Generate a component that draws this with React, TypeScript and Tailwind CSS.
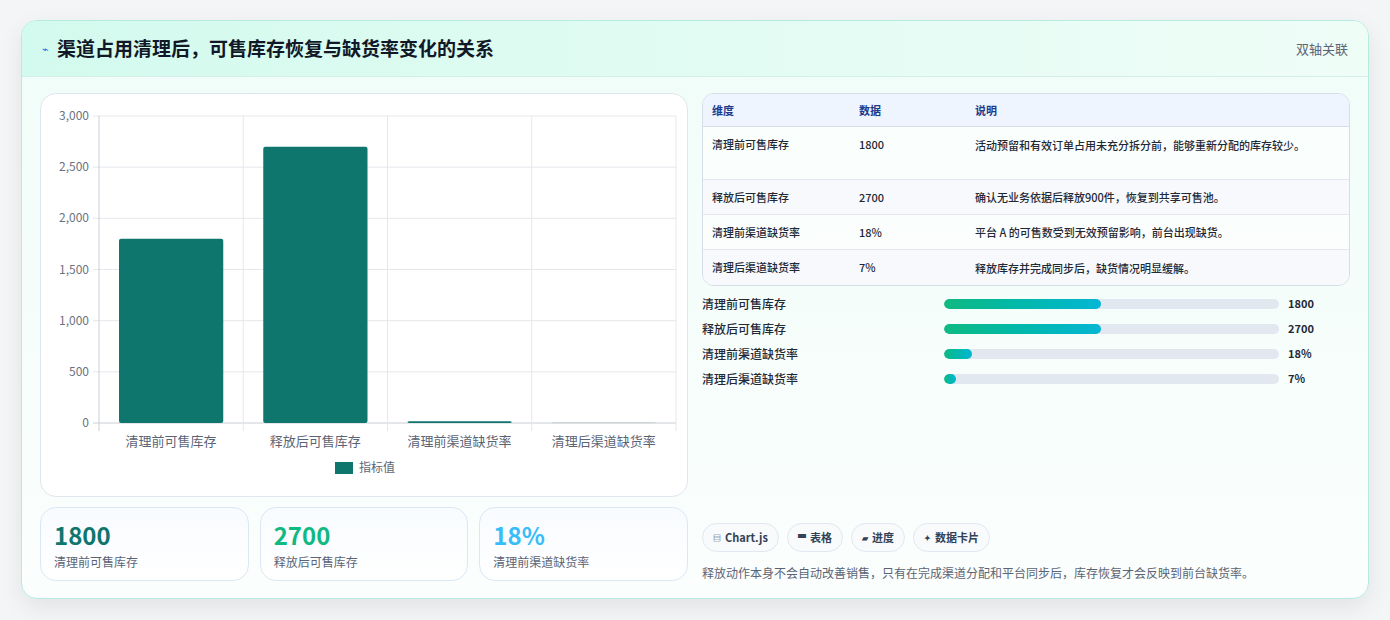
import React from "react";

const F = { fontFamily: '"Noto Sans CJK SC", "Noto Sans", sans-serif' };

function Chart() {
  const x0 = 58, x1 = 635, yTop = 22, yBot = 329;
  const cw = (x1 - x0) / 4;
  const vals = [1800, 2700, 18, 7];
  const labels = ["清理前可售库存", "释放后可售库存", "清理前渠道缺货率", "清理后渠道缺货率"];
  const ys = (v: number) => yBot - (v / 3000) * (yBot - yTop);
  return (
    <svg width="648" height="403" style={F}>
      {[0, 500, 1000, 1500, 2000, 2500, 3000].map((t) => (
        <g key={t}>
          <line x1={x0 - 6} x2={x1} y1={ys(t)} y2={ys(t)} stroke={t === 0 ? "#c9ced6" : "#e5e7eb"} />
          <text x={x0 - 10} y={ys(t) + 4} textAnchor="end" fontSize="12" fill="#6b7280">{t.toLocaleString("en-US")}</text>
        </g>
      ))}
      {[0, 1, 2, 3, 4].map((i) => (
        <line key={i} x1={x0 + i * cw} x2={x0 + i * cw} y1={yTop} y2={yBot + 8} stroke={i === 0 ? "#c9ced6" : "#e5e7eb"} />
      ))}
      {vals.map((v, i) => (
        <rect key={i} x={x0 + i * cw + 20} width={cw - 40} y={ys(v)} height={Math.max(yBot - ys(v), 1)} rx="2" fill={i === 3 ? "#c7d2d0" : "#0f766e"} />
      ))}
      {labels.map((l, i) => (
        <text key={i} x={x0 + i * cw + cw / 2} y={yBot + 23} textAnchor="middle" fontSize="13" fill="#5b6475">{l}</text>
      ))}
      <rect x="294" y="368" width="18" height="12" fill="#0f766e" />
      <text x="318" y="378" fontSize="12" fill="#5b6475">指标值</text>
    </svg>
  );
}

const rows = [
  ["清理前可售库存", "1800", "活动预留和有效订单占用未充分拆分前，能够重新分配的库存较少。"],
  ["释放后可售库存", "2700", "确认无业务依据后释放900件，恢复到共享可售池。"],
  ["清理前渠道缺货率", "18%", "平台 A 的可售数受到无效预留影响，前台出现缺货。"],
  ["清理后渠道缺货率", "7%", "释放库存并完成同步后，缺货情况明显缓解。"],
];

const bars: [string, string, number][] = [
  ["清理前可售库存", "1800", 47],
  ["释放后可售库存", "2700", 47],
  ["清理前渠道缺货率", "18%", 8.5],
  ["清理后渠道缺货率", "7%", 3.7],
];

export default function App() {
  return (
    <div className="w-[1390px] h-[620px] bg-[#f4f5f6] pt-5 pl-[21px]" style={F}>
      <div className="w-[1348px] h-[579px] rounded-2xl border border-[#b7ebe0] bg-gradient-to-b from-[#f0fdf8] to-[#fbfefd] shadow-[0_8px_24px_rgba(0,0,0,0.08)] overflow-hidden">
        <div className="h-[56px] bg-gradient-to-r from-[#d3faee] to-[#effdf7] border-b border-[#d6eee8] flex items-center justify-between pl-[20px] pr-[20px]">
          <div className="flex items-center gap-2">
            <span className="text-[#2563eb] text-[11px]">⌁</span>
            <span className="text-[19px] font-bold text-[#111827]">渠道占用清理后，可售库存恢复与缺货率变化的关系</span>
          </div>
          <span className="text-[13px] text-[#5b6475]">双轴关联</span>
        </div>
        <div className="flex gap-[14px] pl-[18px] pt-[16px]">
          <div className="w-[648px] flex flex-col gap-[10px]">
            <div className="h-[404px] bg-white rounded-2xl border border-[#dfe6ee]">
              <Chart />
            </div>
            <div className="flex gap-[11px]">
              {[["1800", "text-[#0f766e]", "清理前可售库存"], ["2700", "text-[#10b981]", "释放后可售库存"], ["18%", "text-[#38bdf8]", "清理前渠道缺货率"]].map(([v, c, l]) => (
                <div key={l} className="w-[209px] h-[74px] rounded-2xl border border-[#dbe7f3] bg-gradient-to-b from-[#f8fbff] to-white px-[13px] pt-[11px]">
                  <div className={`text-[24px] font-bold leading-[32px] ${c}`}>{v}</div>
                  <div className="text-[12px] text-[#5b6475] mt-[2px]">{l}</div>
                </div>
              ))}
            </div>
          </div>
          <div className="w-[648px] flex flex-col">
            <div className="rounded-xl border border-[#d4dde8] overflow-hidden bg-white/60 text-[11px]">
              <div className="flex h-[33px] items-center bg-[#eef5fe] border-b border-[#d4dde8] font-semibold text-[#1e3a8a]">
                <div className="w-[156px] pl-[9px]">维度</div>
                <div className="w-[116px]">数据</div>
                <div className="flex-1">说明</div>
              </div>
              {rows.map((r, i) => (
                <div key={i} className={`flex ${i === 0 ? "py-[9px] h-[53px]" : "h-[35px] items-center"} ${i < 3 ? "border-b border-[#e3e8ef]" : ""} ${i % 2 ? "bg-[#f7f9fc]" : ""} text-[#1f2937] font-medium`}>
                  <div className="w-[156px] pl-[9px]">{r[0]}</div>
                  <div className="w-[116px]">{r[1]}</div>
                  <div className="flex-1 pr-[24px] leading-[18px]">{r[2]}</div>
                </div>
              ))}
            </div>
            <div className="flex flex-col gap-[8px] mt-[9px]">
              {bars.map(([l, v, p]) => (
                <div key={l} className="flex items-center h-[17px] text-[12px] font-medium text-[#1f2937]">
                  <div className="w-[242px]">{l}</div>
                  <div className="w-[335px] h-[10px] rounded-full bg-[#e2e8f0] overflow-hidden">
                    <div className="h-full rounded-full bg-gradient-to-r from-[#10b981] to-[#06b6d4]" style={{ width: `${p}%` }} />
                  </div>
                  <div className="ml-[9px] font-bold text-[11px]">{v}</div>
                </div>
              ))}
            </div>
            <div className="flex gap-[8px] mt-[136px]">
              {[["▤", "Chart.js"], ["▀", "表格"], ["▰", "进度"], ["✦", "数据卡片"]].map(([i, t]) => (
                <div key={t} className="h-[29px] px-[10px] rounded-full border border-[#e2e8f0] bg-[#f8fafc] flex items-center gap-[4px] text-[11px] font-semibold text-[#334155]">
                  <span className="text-[8px]">{i}</span>{t}
                </div>
              ))}
            </div>
            <div className="mt-[12px] text-[12px] text-[#5b6475]">释放动作本身不会自动改善销售，只有在完成渠道分配和平台同步后，库存恢复才会反映到前台缺货率。</div>
          </div>
        </div>
      </div>
    </div>
  );
}
